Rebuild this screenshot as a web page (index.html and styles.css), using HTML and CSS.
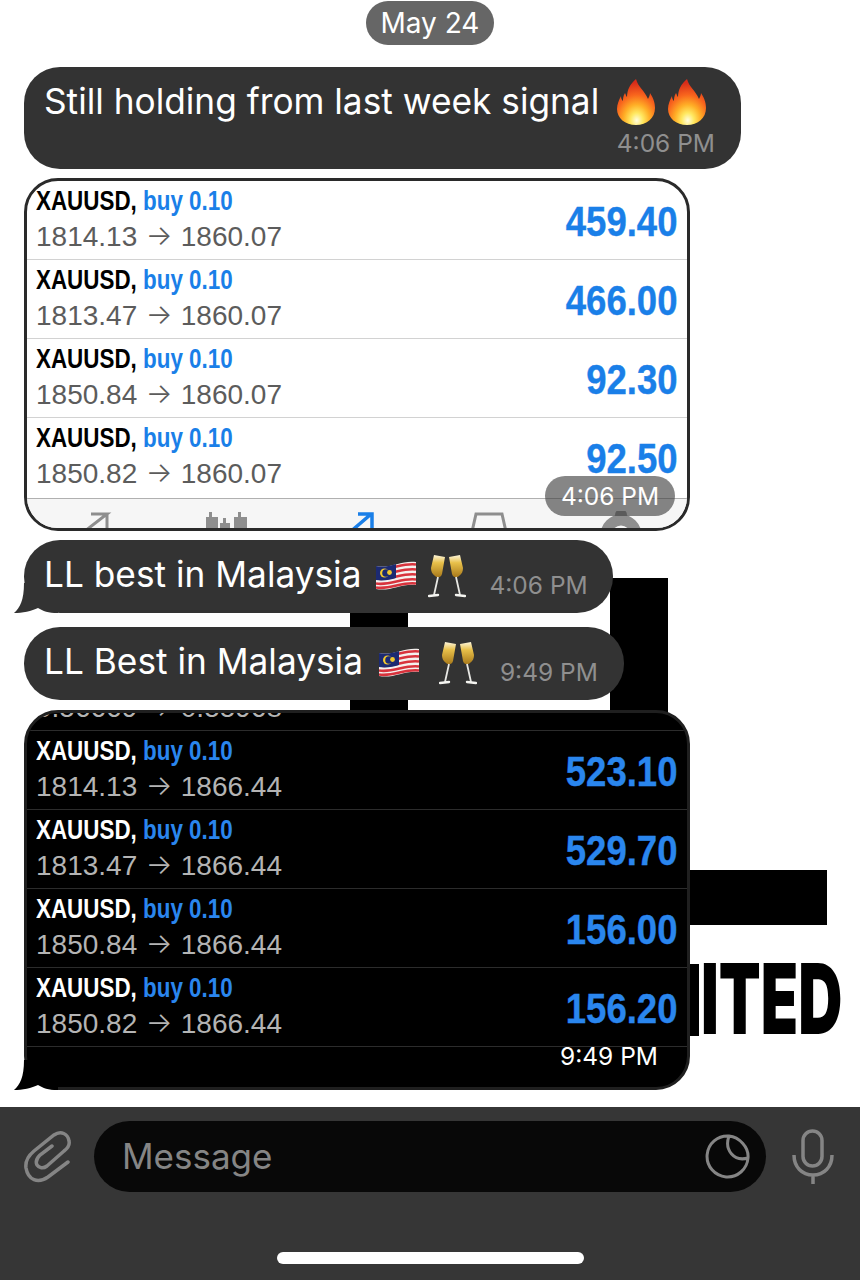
FILE: index.html
```html
<!DOCTYPE html>
<html lang="en">
<head>
<meta charset="utf-8">
<title>Chat</title>
<link rel="stylesheet" href="styles.css">
</head>
<body>
<svg class="defs" width="0" height="0" aria-hidden="true">
  <defs>
    <radialGradient id="fireGrad" cx="52%" cy="90%" r="82%">
      <stop offset="0" stop-color="#fffde0"/>
      <stop offset=".2" stop-color="#ffe860"/>
      <stop offset=".42" stop-color="#ffae26"/>
      <stop offset=".68" stop-color="#f8651d"/>
      <stop offset="1" stop-color="#d82c1a"/>
    </radialGradient>
    <linearGradient id="wineGrad" x1="0" y1="0" x2="0" y2="1">
      <stop offset="0" stop-color="#fdf6dc"/>
      <stop offset=".35" stop-color="#e8c04a"/>
      <stop offset="1" stop-color="#a8791a"/>
    </linearGradient>
    <symbol id="fire" viewBox="0 0 38 46">
      <path fill="url(#fireGrad)" d="M19 0C21 8 28 12 31 20C32 18 33 16 33 14C37 20 38 25 38 29C38 39 30 46 19 46C8 46 0 39 0 30C0 25 2 21 4 17C4 20 5 21 6 22C6 20 6 17 8 14C9 16 9 17 10 18C10 11 13 5 19 0Z"/>
    </symbol>
    <symbol id="flag" viewBox="0 0 40 30">
      <path fill="#f4f0ee" d="M0 6C14 9 26 0 40 2V25C26 23 14 32 0 29Z"/>
      <path fill="none" stroke="#d8323c" stroke-width="2.6" d="M0 8.500C14 11 26 2.500 40 4.500M0 13.500C14 16 26 7.500 40 9.500M0 18.500C14 21 26 12.500 40 14.500M0 23.500C14 26 26 17.500 40 19.500M0 27.500C14 30 26 21.500 40 23.500"/>
      <path fill="#1c2a72" d="M0 6C7 7.500 14 6 20 4V18C14 20 7 21 0 20Z"/>
      <circle cx="8.500" cy="13" r="4.500" fill="#f2c82e"/>
      <circle cx="10" cy="13" r="3.800" fill="#1c2a72"/>
      <circle cx="13.500" cy="12.500" r="2.400" fill="#f2c82e"/>
    </symbol>
    <symbol id="cheers" viewBox="0 0 38 44">
      <path fill="url(#wineGrad)" d="M6 1L17 3L14 20C13 24 9 24 7 22C4 20 3 17 3 14Z"/>
      <path fill="url(#wineGrad)" d="M21 3L32 1L35 14C35 17 34 20 31 22C29 24 25 24 24 20Z"/>
      <path fill="none" stroke="#e8e8e4" stroke-width="1.800" d="M10 23L6 41M28 23L32 41"/>
      <path fill="none" stroke="#f4f4f0" stroke-width="2.400" stroke-linecap="round" d="M1 42L10 41M28 41L37 42"/>
    </symbol>
  </defs>
</svg>

<div class="screen">
  <div class="wallpaper" aria-hidden="true">
    <div class="wp-block wp-tall"></div>
    <div class="wp-block wp-short"></div>
    <div class="wp-block wp-bar"></div>
    <div class="wp-block wp-stem"></div>
    <div class="wp-word">ITED</div>
  </div>

  <main class="chat">
    <div class="date"><span>May 24</span></div>

    <div class="bubble bubble-first">
      <div class="first-line">
        <span class="msg-text">Still holding from last week signal</span>
        <svg class="emoji fire fire-a"><use href="#fire"/></svg>
        <svg class="emoji fire fire-b"><use href="#fire"/></svg>
      </div>
      <div class="first-meta"><span class="time">4:06 PM</span></div>
    </div>

    <section class="shot shot-light">
      <div class="row">
        <div class="deal"><div class="pair">XAUUSD, <b>buy 0.10</b></div><div class="prices">1814.13 <span class="arrow">→</span> 1860.07</div></div>
        <div class="profit">459.40</div>
      </div>
      <div class="row">
        <div class="deal"><div class="pair">XAUUSD, <b>buy 0.10</b></div><div class="prices">1813.47 <span class="arrow">→</span> 1860.07</div></div>
        <div class="profit">466.00</div>
      </div>
      <div class="row">
        <div class="deal"><div class="pair">XAUUSD, <b>buy 0.10</b></div><div class="prices">1850.84 <span class="arrow">→</span> 1860.07</div></div>
        <div class="profit">92.30</div>
      </div>
      <div class="row row-last">
        <div class="deal"><div class="pair">XAUUSD, <b>buy 0.10</b></div><div class="prices">1850.82 <span class="arrow">→</span> 1860.07</div></div>
        <div class="profit">92.50</div>
      </div>
      <nav class="tabs" aria-hidden="true">
        <svg class="tab-icon" viewBox="0 0 44 34"><path fill="none" stroke="#8e8e8e" stroke-width="3" d="M36 3V28M20 3H36L14 20M6 28L14 20"/></svg>
        <svg class="tab-icon" viewBox="0 0 44 34"><path fill="#8e8e8e" d="M3 6H6V1H9V6H15V28H3ZM17 12H20V7H23V12H27V28H17ZM31 6H35V1H38V6H44V28H31Z"/></svg>
        <svg class="tab-icon" viewBox="0 0 44 34"><path fill="none" stroke="#1a7fe8" stroke-width="3.500" d="M5 30L10 25M14 22L35 4M23 3H37V17"/></svg>
        <svg class="tab-icon" viewBox="0 0 44 34"><path fill="none" stroke="#8e8e8e" stroke-width="3" d="M2 34L9 3H35L42 34"/></svg>
        <svg class="tab-icon" viewBox="0 0 44 34"><circle cx="22" cy="24" r="15" fill="none" stroke="#8e8e8e" stroke-width="11"/><circle cx="22" cy="4" r="6" fill="#8e8e8e"/></svg>
      </nav>
      <span class="time-pill">4:06 PM</span>
    </section>

    <div class="bubble bubble-tail">
      <svg class="tail tail-grey" viewBox="0 0 46 30"><path d="M11 0C11 17 7 25 1 30C9 30 19 28 25 25C30 28 35 30 45 30V0Z"/></svg>
      <span class="msg-text">LL best in Malaysia</span>
      <svg class="emoji flag"><use href="#flag"/></svg>
      <svg class="emoji cheers"><use href="#cheers"/></svg>
      <span class="time time-a">4:06 PM</span>
    </div>

    <div class="bubble bubble-plain">
      <span class="msg-text">LL Best in Malaysia</span>
      <svg class="emoji flag"><use href="#flag"/></svg>
      <svg class="emoji cheers cheers-b"><use href="#cheers"/></svg>
      <span class="time time-a">9:49 PM</span>
    </div>

    <section class="shot shot-dark">
      <div class="row row-clip">
        <div class="deal"><div class="pair">&nbsp;</div><div class="prices">0.56669 <span class="arrow">→</span> 0.55968</div></div>
      </div>
      <div class="row">
        <div class="deal"><div class="pair">XAUUSD, <b>buy 0.10</b></div><div class="prices">1814.13 <span class="arrow">→</span> 1866.44</div></div>
        <div class="profit">523.10</div>
      </div>
      <div class="row">
        <div class="deal"><div class="pair">XAUUSD, <b>buy 0.10</b></div><div class="prices">1813.47 <span class="arrow">→</span> 1866.44</div></div>
        <div class="profit">529.70</div>
      </div>
      <div class="row">
        <div class="deal"><div class="pair">XAUUSD, <b>buy 0.10</b></div><div class="prices">1850.84 <span class="arrow">→</span> 1866.44</div></div>
        <div class="profit">156.00</div>
      </div>
      <div class="row">
        <div class="deal"><div class="pair">XAUUSD, <b>buy 0.10</b></div><div class="prices">1850.82 <span class="arrow">→</span> 1866.44</div></div>
        <div class="profit">156.20</div>
      </div>
      <span class="time-plain">9:49 PM</span>
    </section>
    <svg class="tail tail-black" viewBox="0 0 46 30"><path d="M11 0C11 17 7 25 1 30C9 30 19 28 25 25C30 28 35 30 45 30V0Z"/></svg>
  </main>

  <footer class="composer">
    <div class="input-row">
      <svg class="clip" viewBox="0 0 48 54"><path d="M44 32L24 47C14 54 4 50 2 38C1 31 4 26 10 21L30 5C37 0 44 4 45 11C46 15 44 18 40 21L23 36C19 39 15 38 13 35C11 31 13 28 16 25L28 16"/></svg>
      <div class="field">
        <span class="placeholder">Message</span>
        <svg class="sticker" viewBox="0 0 46 46"><path d="M24 3A20.500 20.500 0 1 0 43 25C44 14 34 4 24 3ZM24 3C19 17 29 29 43 25"/></svg>
      </div>
      <svg class="mic" viewBox="0 0 42 56"><rect x="11" y="2" width="19" height="35" rx="9.500"/><path d="M2 26C2 38 10 46 21 46C32 46 40 38 40 26M21 46V55"/></svg>
    </div>
    <div class="home-bar"></div>
  </footer>
</div>
</body>
</html>
```
FILE: styles.css
```css
* { box-sizing: border-box; }

html, body {
  margin: 0;
  padding: 0;
  background: #fff;
}

.defs { position: absolute; }

.screen {
  position: relative;
  width: 860px;
  height: 1280px;
  overflow: hidden;
  display: flex;
  flex-direction: column;
  font-family: Inter, "Noto Sans", sans-serif;
}

/* wallpaper behind the messages */
.wallpaper {
  position: absolute;
  inset: 0;
}
.wp-block {
  position: absolute;
  background: #000;
}
.wp-tall { left: 610px; top: 578px; width: 58px; height: 140px; }
.wp-short { left: 350px; top: 605px; width: 58px; height: 110px; }
.wp-bar { left: 680px; top: 870px; width: 147px; height: 55px; }
.wp-stem { left: 680px; top: 964px; width: 19px; height: 72px; }
.wp-word {
  position: absolute;
  right: 18px;
  top: 940px;
  font-family: Inter, sans-serif;
  font-weight: 900;
  font-size: 97px;
  line-height: 118px;
  color: #000;
  transform: scaleX(.63);
  transform-origin: right center;
  white-space: nowrap;
}

/* message column */
.chat {
  position: relative;
  flex: 1;
  padding: 1px 0 0 24px;
  display: flex;
  flex-direction: column;
  align-items: flex-start;
}

.date {
  align-self: center;
  margin-left: -24px;
  width: 128px;
  height: 44px;
  border-radius: 22px;
  background: #666;
  color: #fff;
  font-size: 28px;
  line-height: 44px;
  text-align: center;
}

.bubble {
  position: relative;
  background: #333;
  color: #fff;
  display: flex;
  align-items: center;
  padding: 0 0 4px 20px;
  height: 73px;
  border-radius: 36px;
}
.msg-text {
  position: relative;
  z-index: 1;
  font-size: 35.250px;
  line-height: 44px;
  white-space: nowrap;
}
.time {
  font-size: 24.500px;
  line-height: 30px;
  color: #8f8f8f;
  white-space: nowrap;
}

.bubble-first {
  display: block;
  width: 717px;
  height: 102px;
  margin-top: 22px;
  padding-top: 13px;
  padding-bottom: 0;
  border-radius: 36px;
}
.first-line {
  display: flex;
  align-items: center;
  height: 44px;
}
.first-meta {
  text-align: right;
  padding-right: 26px;
  margin-top: 4px;
}

.emoji { display: block; flex: none; position: relative; z-index: 1; }
.fire { width: 38px; height: 46px; }
.fire-a { margin-left: 18px; }
.fire-b { margin-left: 13px; }
.flag { width: 40px; height: 30px; margin-left: 15px; }
.cheers { width: 38px; height: 44px; margin-left: 12px; margin-top: 2px; }
.bubble-plain .flag { margin-left: 16px; }
.cheers-b { margin-left: 20px; }
.time-a { margin-left: 23px; margin-top: 20px; }

.bubble-tail { width: 589px; margin-top: 9px; }
.bubble-plain { width: 600px; margin-top: 14px; }

.tail {
  position: absolute;
  width: 46px;
  height: 30px;
}
.tail-grey { left: -11px; bottom: 0; fill: #333; }
.tail-black { left: 13px; top: 1060px; fill: #000; }

/* screenshots of the trade list */
.shot {
  position: relative;
  width: 666px;
  border: 3px solid #2a2a2a;
  border-radius: 34px;
  overflow: hidden;
  font-family: "Liberation Sans", Arial, sans-serif;
}
.shot-light {
  height: 353px;
  margin-top: 9px;
  background: #fff;
  color: #000;
}
.shot-dark {
  height: 380px;
  margin-top: 10px;
  background: #000;
  color: #fff;
  border-color: #1f1f1f;
}

.row {
  display: flex;
  justify-content: space-between;
  height: 79px;
  padding: 2px 9px 0 9px;
  border-bottom: 1px solid #d2d2d2;
}
.row-last { height: 80px; border-bottom: 0; }
.shot-dark .row { border-bottom-color: #2c2c2c; }
.row-clip { margin-top: -61px; }

.pair {
  font-weight: 700;
  font-size: 28px;
  line-height: 36px;
  white-space: nowrap;
  transform: scaleX(.8);
  transform-origin: left center;
}
.pair b { color: #1a7fe8; }
.shot-dark .pair b { color: #2a86ee; }
.prices {
  font-size: 28px;
  line-height: 36px;
  color: #5c5c5c;
  white-space: nowrap;
}
.shot-dark .prices { color: #b4b4b4; }
.arrow {
  display: inline-block;
  width: 28px;
  font-family: Inter, sans-serif;
  font-weight: 300;
  line-height: 28px;
  text-align: center;
  position: relative;
  top: -1px;
}
.profit {
  font-weight: 700;
  font-size: 43px;
  line-height: 76px;
  color: #1a7fe8;
  -webkit-text-stroke: .4px currentColor;
  transform: scaleX(.85);
  transform-origin: right center;
}
.shot-dark .profit { color: #2a86ee; }

.tabs {
  height: 30px;
  background: #f6f6f6;
  border-top: 1px solid #b0b0b0;
  display: grid;
  grid-template-columns: repeat(5, 1fr);
  justify-items: center;
  padding-top: 12px;
}
.tab-icon { width: 44px; height: 34px; display: block; }

.time-pill {
  position: absolute;
  right: 12px;
  bottom: 12px;
  width: 130px;
  height: 40px;
  border-radius: 20px;
  background: rgba(60, 60, 60, .62);
  color: #fff;
  font-family: Inter, sans-serif;
  font-size: 24.500px;
  line-height: 40px;
  text-align: center;
}
.time-plain {
  position: absolute;
  right: 29px;
  bottom: 16px;
  color: #fff;
  font-family: Inter, sans-serif;
  font-size: 24.500px;
  line-height: 30px;
}

/* composer */
.composer {
  position: relative;
  flex: none;
  height: 173px;
  background: #363636;
  padding: 14px 27px 0 24px;
}
.input-row {
  display: flex;
  align-items: center;
  height: 71px;
}
.clip {
  width: 48px;
  height: 54px;
  flex: none;
  fill: none;
  stroke: #858585;
  stroke-width: 3.500;
  stroke-linecap: round;
}
.field {
  flex: none;
  width: 672px;
  height: 71px;
  margin-left: 22px;
  padding: 0 15px 2px 28px;
  border-radius: 36px;
  background: #080808;
  display: flex;
  align-items: center;
  justify-content: space-between;
}
.placeholder {
  font-size: 35px;
  color: #858585;
}
.sticker {
  width: 46px;
  height: 46px;
  fill: none;
  stroke: #858585;
  stroke-width: 3;
}
.mic {
  width: 42px;
  height: 56px;
  margin-left: 26px;
  flex: none;
  fill: none;
  stroke: #858585;
  stroke-width: 3.500;
}
.home-bar {
  width: 307px;
  height: 12px;
  margin: 60px 0 0 253px;
  border-radius: 6px;
  background: #fff;
}
```
